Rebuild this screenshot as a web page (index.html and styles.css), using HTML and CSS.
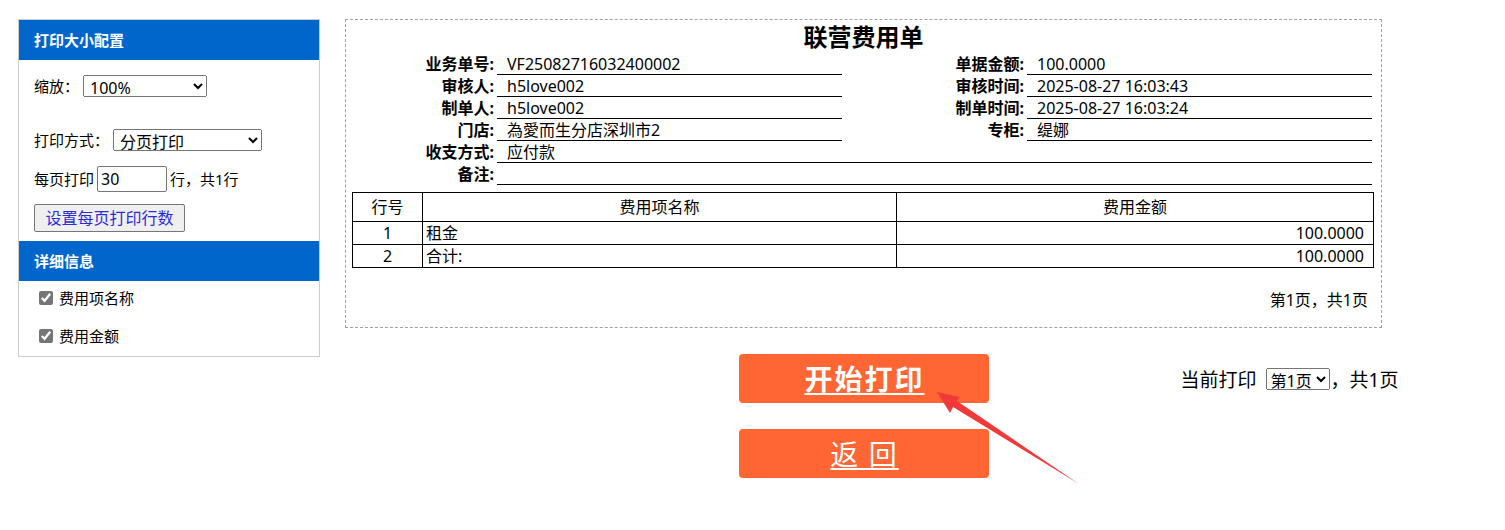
FILE: index.html
```html
<!DOCTYPE html>
<html lang="zh-CN">
<head>
    <meta charset="UTF-8">
    <meta name="viewport" content="width=device-width, initial-scale=1.0">
    <title>联营费用单打印</title>
    <link rel="stylesheet" href="styles.css">
</head>
<body>
    <div class="page">
        <aside class="panel">
            <div class="panel-title">打印大小配置</div>
            <div class="panel-body">
                <div class="field field-zoom">
                    <label>缩放：</label>
                    <select class="sel-zoom"><option>100%</option></select>
                </div>
                <div class="field field-mode">
                    <label>打印方式：</label>
                    <select class="sel-mode"><option>分页打印</option></select>
                </div>
                <div class="field field-rows">
                    <label>每页打印</label>
                    <input class="rows-input" type="text" value="30">
                    <span>行，共1行</span>
                </div>
                <button class="btn-set">设置每页打印行数</button>
            </div>
            <div class="panel-title">详细信息</div>
            <ul class="check-list">
                <li><label><input type="checkbox" checked>费用项名称</label></li>
                <li><label><input type="checkbox" checked>费用金额</label></li>
            </ul>
        </aside>

        <main class="main">
            <div class="sheet">
                <h1 class="sheet-title">联营费用单</h1>
                <div class="info">
                    <div class="lbl">业务单号:</div><div class="val">VF25082716032400002</div>
                    <div class="lbl">单据金额:</div><div class="val">100.0000</div>
                    <div class="lbl">审核人:</div><div class="val">h5love002</div>
                    <div class="lbl">审核时间:</div><div class="val">2025-08-27 16:03:43</div>
                    <div class="lbl">制单人:</div><div class="val">h5love002</div>
                    <div class="lbl">制单时间:</div><div class="val">2025-08-27 16:03:24</div>
                    <div class="lbl">门店:</div><div class="val">為愛而生分店深圳市2</div>
                    <div class="lbl">专柜:</div><div class="val">缇娜</div>
                    <div class="lbl">收支方式:</div><div class="val val-wide">应付款</div>
                    <div class="lbl">备注:</div><div class="val val-wide"></div>
                </div>
                <table class="items">
                    <tr>
                        <th class="col-no">行号</th>
                        <th class="col-name">费用项名称</th>
                        <th class="col-amt">费用金额</th>
                    </tr>
                    <tr>
                        <td class="c-no">1</td>
                        <td class="c-name">租金</td>
                        <td class="c-amt">100.0000</td>
                    </tr>
                    <tr>
                        <td class="c-no">2</td>
                        <td class="c-name">合计:</td>
                        <td class="c-amt">100.0000</td>
                    </tr>
                </table>
                <p class="sheet-foot">第1页，共1页</p>
            </div>

            <div class="actions">
                <div class="btn-col">
                    <a class="btn-big btn-print" href="#">开始打印</a>
                    <a class="btn-big btn-back" href="#">返 回</a>
                </div>
                <div class="page-pick">
                    当前打印<select class="sel-page"><option>第1页</option></select>，共1页
                </div>
            </div>
        </main>
    </div>

    <svg class="pointer" width="155" height="105" viewBox="0 0 155 105">
        <polygon points="7,7 20,28 23,22 149,99 27,16 30,12" fill="#f03a3a"/>
    </svg>
</body>
</html>
```

FILE: styles.css
```css
body {
    margin: 0;
    font-family: "Noto Sans", "Noto Sans CJK SC", sans-serif;
    color: #000;
    background: #fff;
}
.page {
    display: flex;
    align-items: flex-start;
    gap: 25px;
    padding: 19px 0 0 18px;
}

/* left config panel */
.panel {
    width: 300px;
    border: 1px solid #cccccc;
    font-size: 15px;
}
.panel-title {
    height: 40px;
    line-height: 40px;
    padding-left: 15px;
    background-color: #0066cc;
    color: #fff;
    font-weight: bold;
    font-size: 15px;
}
.panel-body {
    padding: 15px 0 9px 15px;
}
.field {
    display: flex;
    align-items: center;
    line-height: 22px;
}
.field select {
    height: 22px;
    margin-left: 4px;
    font-family: inherit;
    font-size: 16px;
    padding: 0 2px;
}
.sel-zoom {
    width: 124px;
}
.field-mode {
    margin-top: 32px;
}
.sel-mode {
    width: 149px;
}
.field-rows {
    margin-top: 15px;
    height: 26px;
}
.rows-input {
    width: 70px;
    height: 26px;
    box-sizing: border-box;
    margin: 0 3px;
    padding: 0 3px;
    font-family: inherit;
    font-size: 16px;
    border: 1px solid #767676;
    border-radius: 2px;
}
.btn-set {
    margin-top: 12px;
    height: 28px;
    width: 151px;
    padding: 0;
    font-family: inherit;
    font-size: 16px;
    line-height: 26px;
    color: #2b2bd8;
    background: #efefef;
    border: 1px solid #767676;
    border-radius: 2px;
}
.check-list {
    list-style: none;
    margin: 0;
    padding: 7px 0 10px 20px;
}
.check-list li {
    height: 20px;
    line-height: 20px;
}
.check-list li + li {
    margin-top: 18px;
}
.check-list label {
    display: flex;
    align-items: center;
}
.check-list input {
    width: 14px;
    height: 14px;
    margin: 0 6px 0 0;
    accent-color: #767676;
}

/* print sheet */
.main {
    width: 1037px;
}
.sheet {
    border: 1px dashed #a0a0a0;
    padding: 0 6px 15px 6px;
}
.sheet-title {
    margin: 0;
    font-size: 24px;
    line-height: 33px;
    text-align: center;
}
.info {
    display: grid;
    grid-template-columns: 145px 345px 185px 345px;
    font-size: 16px;
}
.lbl {
    height: 22px;
    line-height: 22px;
    text-align: right;
    padding-right: 3px;
    font-weight: bold;
    white-space: nowrap;
}
.val {
    height: 21px;
    line-height: 22px;
    padding-left: 10px;
    border-bottom: 1px solid #000;
    white-space: nowrap;
}
.val-wide {
    grid-column: 2 / 5;
}
.items {
    width: 1022px;
    margin-top: 7px;
    border-collapse: collapse;
    font-size: 16px;
}
.items th,
.items td {
    border: 1px solid #000;
    padding: 0;
    font-weight: normal;
    line-height: 20px;
}
.items th {
    height: 28px;
}
.items td {
    height: 22px;
}
.col-no {
    width: 69px;
}
.col-name {
    width: 473px;
}
.c-no {
    text-align: center;
}
.c-name {
    padding-left: 3px !important;
}
.c-amt {
    text-align: right;
    padding-right: 9px !important;
}
.sheet-foot {
    margin: 20px 0 0;
    padding-right: 7px;
    text-align: right;
    font-size: 16px;
    line-height: 24px;
}

/* bottom actions */
.actions {
    display: grid;
    grid-template-columns: minmax(0, 1fr) 250px minmax(0, 1fr);
    margin-top: 26px;
}
.btn-col {
    grid-column: 2;
    display: flex;
    flex-direction: column;
    gap: 26px;
}
.btn-big {
    display: block;
    height: 49px;
    line-height: 49px;
    text-align: center;
    background-color: #ff6633;
    color: #fff;
    border-radius: 4px;
    font-family: "Noto Sans CJK SC", sans-serif;
    font-size: 28px;
    letter-spacing: 2px;
    text-indent: 2px;
    text-decoration: underline;
    text-underline-offset: 3px;
}
.btn-print {
    font-weight: bold;
}
.page-pick {
    grid-column: 3;
    height: 49px;
    padding-left: 192px;
    display: flex;
    align-items: center;
    white-space: nowrap;
    font-size: 19px;
}
.sel-page {
    width: 69px;
    height: 22px;
    margin: 0 1px 0 9px;
    padding: 0;
    font-family: inherit;
    font-size: 16px;
}

/* annotation arrow */
.pointer {
    position: absolute;
    left: 930px;
    top: 385px;
}
```
